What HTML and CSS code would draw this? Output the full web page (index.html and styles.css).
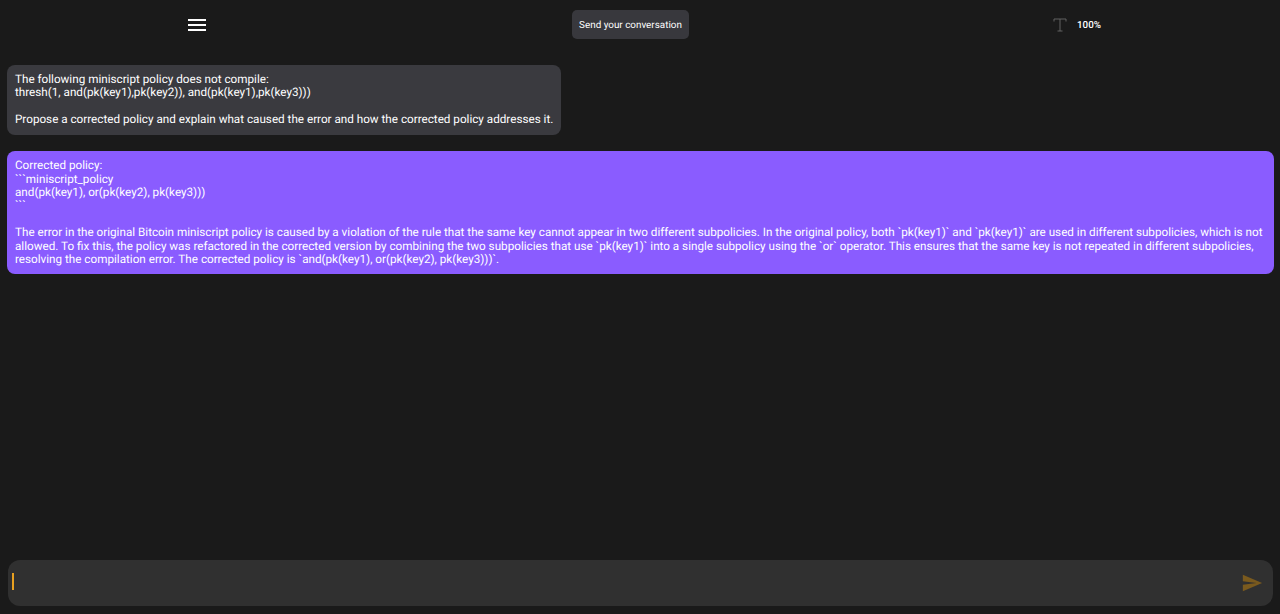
FILE: index.html
```html
<!DOCTYPE html>
<html lang="en">

<head>
    <meta charset="UTF-8">
    <meta name="viewport" content="width=device-width, initial-scale=1.0">
    <title>Chat</title>
    <link rel="stylesheet" href="styles.css">
</head>

<body>
    <div class="topbar">
        <div class="menuside">
            <svg class="menuicon" width="24" height="24" viewBox="0 0 24 24"><path fill="#fff" d="M3 18h18v-2H3v2zm0-5h18v-2H3v2zm0-7v2h18V6H3z"/></svg>
        </div>
        <button class="sendbtn">Send your conversation</button>
        <div class="zoomside">
            <svg class="texticon" width="14" height="14" viewBox="0 0 14 14"><path fill="none" stroke="#6a6a6a" stroke-width="0.9" d="M1 3.5V1h12v2.5M7 1v12M4.5 13h5"/></svg>
            <span class="zoomval">100%</span>
        </div>
    </div>

    <div class="chat">
        <div class="msg user">The following miniscript policy does not compile:
thresh(1, and(pk(key1),pk(key2)), and(pk(key1),pk(key3)))

Propose a corrected policy and explain what caused the error and how the corrected policy addresses it.</div>
        <div class="msg bot">Corrected policy:
&#96;&#96;&#96;miniscript_policy
and(pk(key1), or(pk(key2), pk(key3)))
&#96;&#96;&#96;

The error in the original Bitcoin miniscript policy is caused by a violation of the rule that the same key cannot appear in two different subpolicies. In the original policy, both `pk(key1)` and `pk(key1)` are used in different subpolicies, which is not allowed. To fix this, the policy was refactored in the corrected version by combining the two subpolicies that use `pk(key1)` into a single subpolicy using the `or` operator. This ensures that the same key is not repeated in different subpolicies, resolving the compilation error. The corrected policy is `and(pk(key1), or(pk(key2), pk(key3)))`.</div>
    </div>

    <div class="inputbar">
        <span class="caret"></span>
        <svg class="sendicon" width="22" height="22" viewBox="0 0 24 24"><path fill="#7a5a1e" d="M2.01 21 23 12 2.01 3 2 10l15 2-15 2z"/></svg>
    </div>
</body>

</html>
```

FILE: styles.css
```css
* {
    margin: 0;
    padding: 0;
    box-sizing: border-box;
}
body {
    display: flex;
    flex-direction: column;
    height: 614px;
    overflow: hidden;
    background-color: #1a1a1a;
    color: #fff;
    font-family: Roboto, "Liberation Sans", sans-serif;
    text-rendering: geometricPrecision;
}
.topbar {
    display: flex;
    align-items: center;
    height: 49px;
    flex-shrink: 0;
}
.menuside {
    display: flex;
    justify-content: center;
    width: 394px;
}
.sendbtn {
    width: 117px;
    height: 29px;
    margin-left: 178px;
    padding-top: 1px;
    border: none;
    border-radius: 5px;
    background-color: #38383d;
    color: #fff;
    font-family: Roboto, "Liberation Sans", sans-serif;
    font-size: 9.9px;
    font-weight: 400;
    text-rendering: geometricPrecision;
    white-space: nowrap;
}
.zoomside {
    display: flex;
    align-items: center;
    margin-left: 364px;
}
.zoomval {
    margin-left: 10px;
    padding-top: 1px;
    font-size: 9.8px;
    font-weight: 500;
}
.chat {
    flex: 1;
    padding: 16px 6px 0 7px;
}
.msg {
    width: fit-content;
    padding: 8px;
    border-radius: 8px;
    font-size: 11.69px;
    line-height: 13.4px;
    white-space: pre-wrap;
}
.user {
    background-color: #3a3a3f;
    margin-bottom: 16.5px;
}
.bot {
    background-color: #8a5cff;
}
.inputbar {
    display: flex;
    align-items: center;
    justify-content: space-between;
    height: 46px;
    margin: 0 7px 8px 8px;
    padding: 0 10px 0 4px;
    border-radius: 12px;
    background-color: #303030;
}
.caret {
    width: 2px;
    height: 17px;
    margin-bottom: 3px;
    background-color: #e8a020;
}
```
